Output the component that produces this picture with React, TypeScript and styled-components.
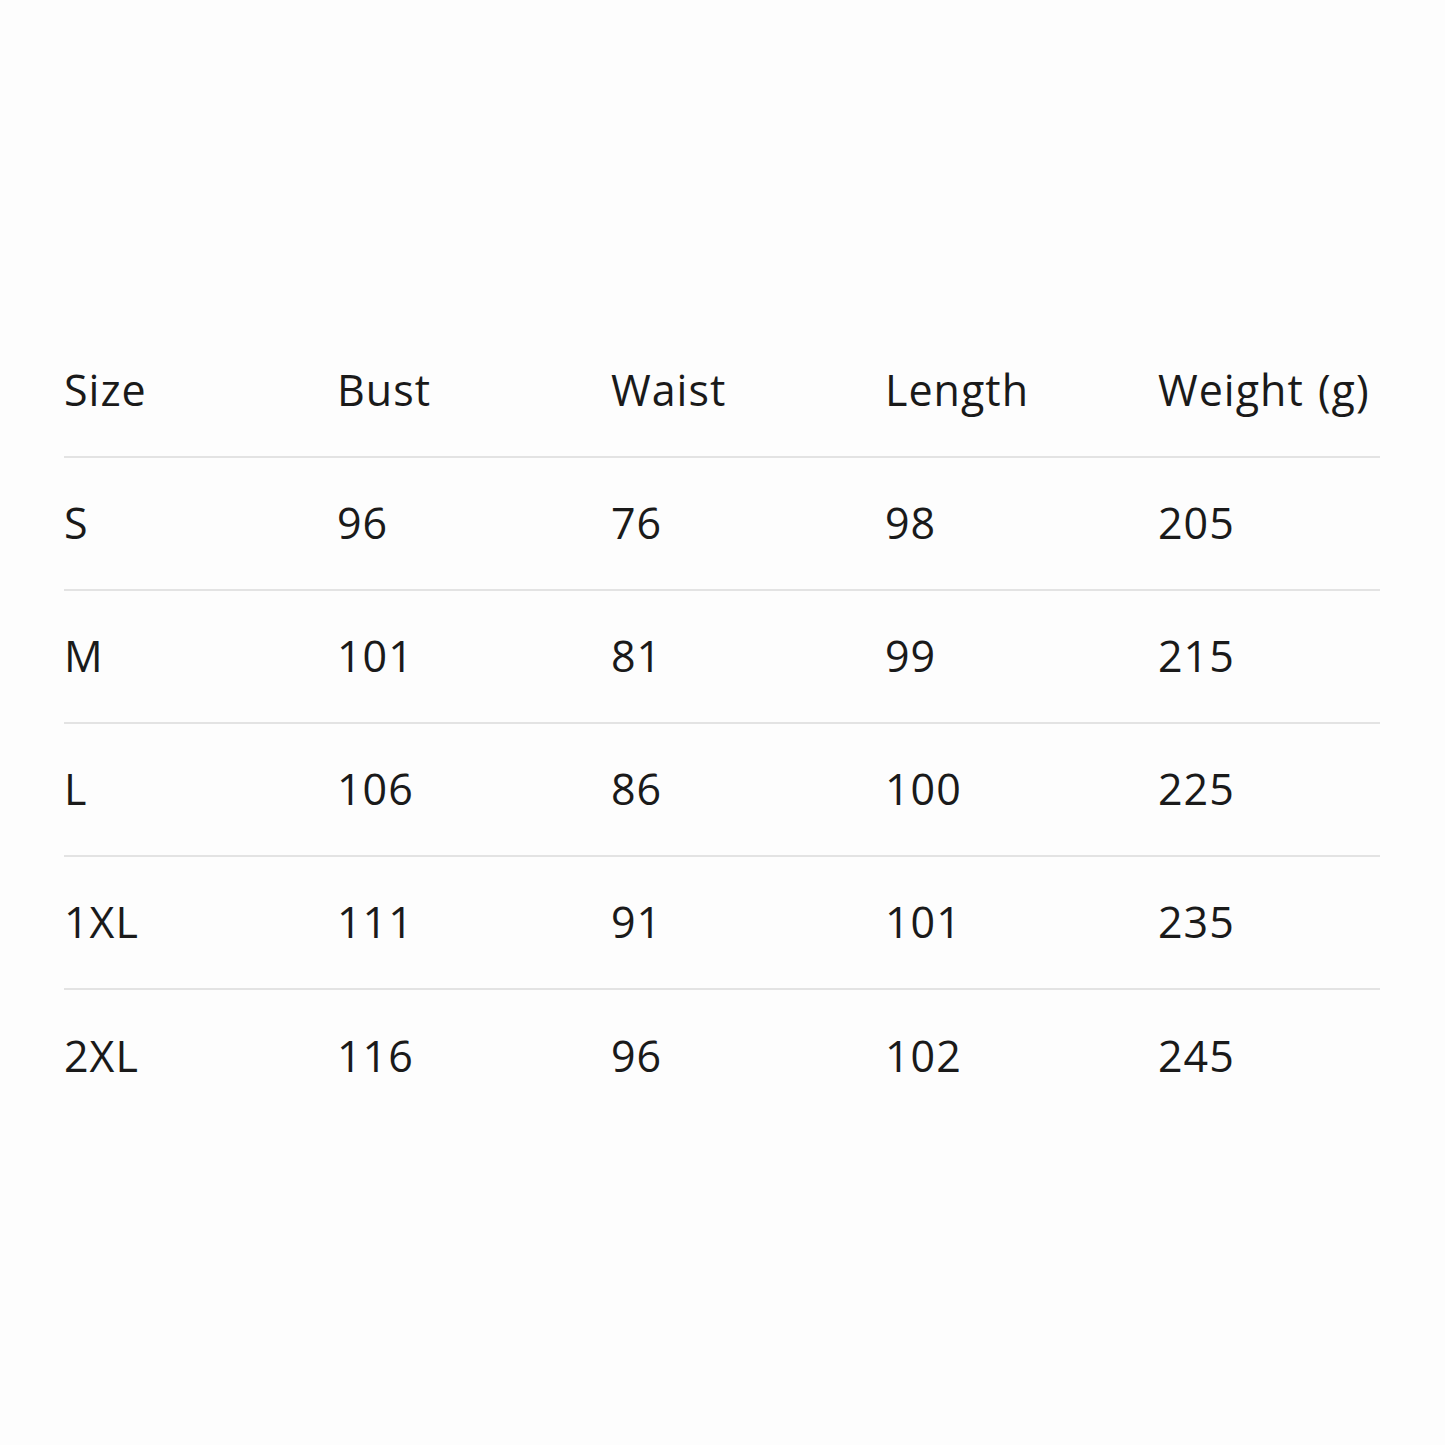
import styled, { createGlobalStyle } from "styled-components";

const GlobalStyle = createGlobalStyle`
  html, body {
    margin: 0;
    padding: 0;
    background: #fdfdfd;
  }
`;

const Page = styled.div`
  width: 1445px;
  height: 1445px;
  box-sizing: border-box;
  padding: 325px 0 0 64px;
  background: #fdfdfd;
`;

const Table = styled.div`
  width: 1316px;
  display: flex;
  flex-direction: column;
  font-family: "Open Sans", "Noto Sans", sans-serif;
  color: #1a1a1a;
`;

const Row = styled.div<{ $last?: boolean }>`
  display: grid;
  grid-template-columns: 273px 274px 274px 273px 1fr;
  align-items: center;
  height: 133px;
  box-sizing: border-box;
  border-bottom: ${(p) => (p.$last ? "none" : "2px solid #e3e3e3")};
`;

const Cell = styled.div`
  font-size: 43px;
  line-height: 1;
  letter-spacing: 1px;
  word-spacing: 2px;
  white-space: nowrap;
  padding-bottom: 2px;
`;

const headers = ["Size", "Bust", "Waist", "Length", "Weight (g)"];

const rows = [
  ["S", "96", "76", "98", "205"],
  ["M", "101", "81", "99", "215"],
  ["L", "106", "86", "100", "225"],
  ["1XL", "111", "91", "101", "235"],
  ["2XL", "116", "96", "102", "245"],
];

export default function App() {
  return (
    <>
      <GlobalStyle />
      <Page>
        <Table>
          <Row>
            {headers.map((h) => (
              <Cell key={h}>{h}</Cell>
            ))}
          </Row>
          {rows.map((r, i) => (
            <Row key={r[0]} $last={i === rows.length - 1}>
              {r.map((c, j) => (
                <Cell key={j}>{c}</Cell>
              ))}
            </Row>
          ))}
        </Table>
      </Page>
    </>
  );
}
